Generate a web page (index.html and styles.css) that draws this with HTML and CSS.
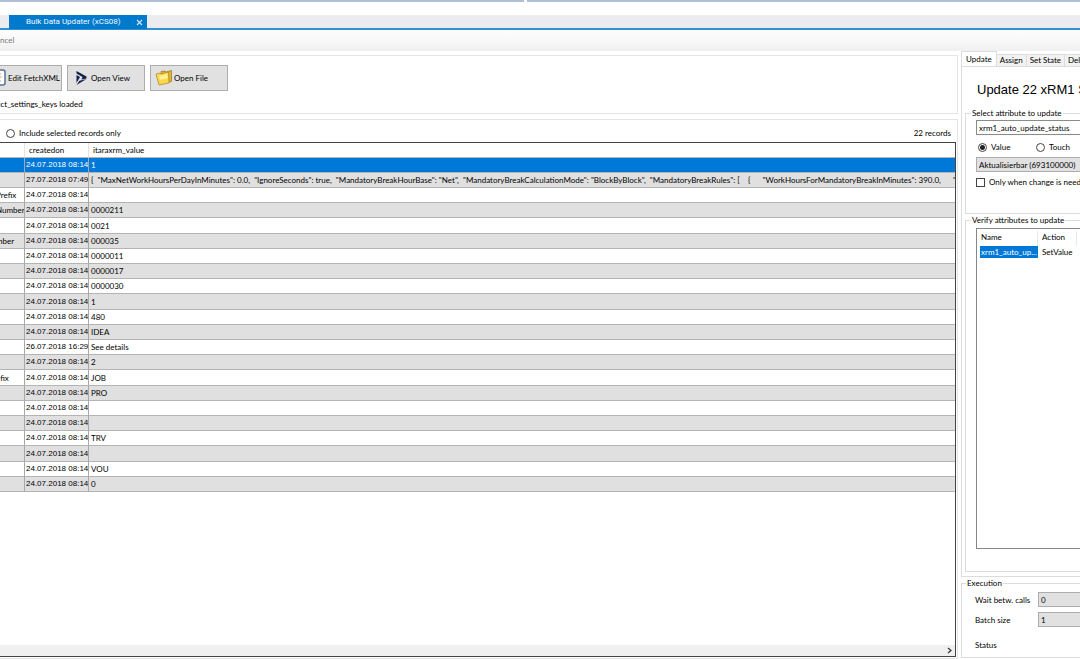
FILE: index.html
```html
<!DOCTYPE html>
<html lang="en">
<head>
    <meta charset="UTF-8">
    <meta name="viewport" content="width=device-width, initial-scale=1.0">
    <title>Bulk Data Updater</title>
    <link rel="stylesheet" href="styles.css">
</head>
<body>

<div class="window-edge"><span class="edge-left"></span><span class="edge-right"></span></div>
<div class="doc-tabs">
    <div class="doc-tab">
        <span>Bulk Data Updater (xCS08)</span>
        <button class="close" aria-label="Close">
            <svg width="7" height="7" viewBox="0 0 7 7"><path d="M1 1l5 5M6 1l-5 5" stroke="#d5eafa" stroke-width="1.1"/></svg>
        </button>
    </div>
</div>
<div class="menu"><button class="cancel">ncel</button></div>

<div class="main">
    <div class="left">
        <section class="box source">
            <div class="source-buttons">
                <button class="button">
                    <svg width="18" height="18" viewBox="0 0 18 18"><rect x="2" y="1" width="14" height="15" rx="2" fill="#fff" stroke="#52719c" stroke-width="1.5"/><path d="M5 5h7M5 8h8M5 12h7" stroke="#e8a060"/></svg>
                    Edit FetchXML
                </button>
                <button class="button">
                    <svg width="18" height="18" viewBox="0 0 18 18"><path d="M4.500 2L14.500 7.500V9.500L9.500 10.500L10.500 8L4.500 4.500Z" fill="#12204d"/><path d="M14.500 10L4.500 16L7.500 11.800Z" fill="#12204d"/><path d="M4.500 6L8 8L4.500 14Z" fill="#12204d"/></svg>
                    Open View
                </button>
                <button class="button">
                    <svg width="18" height="18" viewBox="0 0 18 18">
                        <path d="M6 2.500l4-.5 1 1 5.500-1.500v11l-9 2z" fill="#e3b62b" stroke="#8c7430" stroke-width=".7"/>
                        <path d="M1 5l4-1 1 1 7.500-2 .5 11-10 2z" fill="#fbd84b" stroke="#a58428" stroke-width=".7"/>
                        <path d="M4 7l8-2 1 4-8 2z" fill="#fff09a"/>
                    </svg>
                    Open File
                </button>
            </div>
            <p class="status-text">uct_settings_keys loaded</p>
        </section>

        <section class="box records">
            <div class="records-bar">
                <label class="check"><input type="radio" name="include"> Include selected records only</label>
                <span>22 records</span>
            </div>
            <div class="grid">
                <table>
                    <thead>
                        <tr><th class="key"></th><th class="date">createdon</th><th>itaraxrm_value</th></tr>
                    </thead>
                    <tbody>
                        <tr class="selected"><td></td><td>24.07.2018 08:14</td><td>1</td></tr>
                        <tr><td></td><td>27.07.2018 07:49</td><td>{  "MaxNetWorkHoursPerDayInMinutes": 0.0,  "IgnoreSeconds": true,  "MandatoryBreakHourBase": "Net",  "MandatoryBreakCalculationMode": "BlockByBlock",  "MandatoryBreakRules": [    {      "WorkHoursForMandatoryBreakInMinutes": 390.0,      "WorkHoursF</td></tr>
                        <tr><td>Prefix</td><td>24.07.2018 08:14</td><td></td></tr>
                        <tr><td>Number</td><td>24.07.2018 08:14</td><td>0000211</td></tr>
                        <tr><td></td><td>24.07.2018 08:14</td><td>0021</td></tr>
                        <tr><td>mber</td><td>24.07.2018 08:14</td><td>000035</td></tr>
                        <tr><td></td><td>24.07.2018 08:14</td><td>0000011</td></tr>
                        <tr><td></td><td>24.07.2018 08:14</td><td>0000017</td></tr>
                        <tr><td></td><td>24.07.2018 08:14</td><td>0000030</td></tr>
                        <tr><td></td><td>24.07.2018 08:14</td><td>1</td></tr>
                        <tr><td></td><td>24.07.2018 08:14</td><td>480</td></tr>
                        <tr><td></td><td>24.07.2018 08:14</td><td>IDEA</td></tr>
                        <tr><td></td><td>26.07.2018 16:29</td><td>See details</td></tr>
                        <tr><td></td><td>24.07.2018 08:14</td><td>2</td></tr>
                        <tr><td>efix</td><td>24.07.2018 08:14</td><td>JOB</td></tr>
                        <tr><td></td><td>24.07.2018 08:14</td><td>PRO</td></tr>
                        <tr><td></td><td>24.07.2018 08:14</td><td></td></tr>
                        <tr><td></td><td>24.07.2018 08:14</td><td></td></tr>
                        <tr><td></td><td>24.07.2018 08:14</td><td>TRV</td></tr>
                        <tr><td></td><td>24.07.2018 08:14</td><td></td></tr>
                        <tr><td></td><td>24.07.2018 08:14</td><td>VOU</td></tr>
                        <tr><td></td><td>24.07.2018 08:14</td><td>0</td></tr>
                    </tbody>
                </table>
                <div class="scrollbar">
                    <svg width="11" height="11" viewBox="0 0 11 11"><path d="M4 3l3 2.500-3 2.500" fill="none" stroke="#333" stroke-width="1.2"/></svg>
                </div>
            </div>
        </section>
    </div>

    <aside class="right">
        <div class="tabs">
            <button class="tab active">Update</button>
            <button class="tab">Assign</button>
            <button class="tab">Set State</button>
            <button class="tab">Delete</button>
        </div>
        <div class="panel">
            <h1>Update 22 xRM1 Settings</h1>
            <fieldset class="attribute">
                <legend>Select attribute to update</legend>
                <select class="combo" aria-label="Attribute"><option>xrm1_auto_update_status</option></select>
                <div class="radios">
                    <label class="check"><input type="radio" name="mode" checked> Value</label>
                    <label class="check"><input type="radio" name="mode"> Touch</label>
                </div>
                <select class="combo grey" aria-label="Value"><option>Aktualisierbar (693100000)</option></select>
                <label class="check"><input type="checkbox"> Only when change is needed</label>
            </fieldset>
            <fieldset class="verify">
                <legend>Verify attributes to update</legend>
                <div class="list">
                    <table>
                        <thead><tr><th>Name</th><th>Action</th></tr></thead>
                        <tbody><tr><td class="picked">xrm1_auto_up...</td><td>SetValue</td></tr></tbody>
                    </table>
                </div>
            </fieldset>
        </div>
        <fieldset class="execution">
            <legend>Execution</legend>
            <div class="field"><label for="wait">Wait betw. calls</label><input id="wait" type="text" value="0"></div>
            <div class="field"><label for="batch">Batch size</label><input id="batch" type="text" value="1"></div>
            <p>Status</p>
        </fieldset>
    </aside>
</div>

</body>
</html>
```
FILE: styles.css
```css
* {
    box-sizing: border-box;
}
body {
    margin: 0;
    height: 100vh;
    display: flex;
    flex-direction: column;
    overflow: hidden;
    background: #fff;
    color: #000;
    font: 8px/12px Lato, "Liberation Sans", Arial, sans-serif;
    white-space: nowrap;
}
button, input, select {
    font: inherit;
    color: inherit;
}
p, h1 {
    margin: 0;
}

/* top of the window */
.window-edge {
    display: flex;
    gap: 3px;
    height: 2px;
    flex: none;
}
.edge-left {
    width: 524px;
    background: #afbfd5;
}
.edge-right {
    flex: 1;
    background: #afbfd5;
}
.doc-tabs {
    flex: none;
    margin-top: 13px;
    height: 15px;
    padding-left: 9px;
    background: #ecebf0;
    border-bottom: 2px solid #348fcf;
}
.doc-tab {
    display: flex;
    align-items: center;
    justify-content: space-between;
    width: 138px;
    height: 14px;
    padding: 0 4px 0 17px;
    background: #007acc;
    color: #f0f8ff;
    font-family: Roboto, sans-serif;
}
.close {
    display: flex;
    border: 0;
    padding: 0;
    background: none;
}
.menu {
    flex: none;
    height: 21px;
    background: linear-gradient(#fdfdfd, #f8f8f8 50%, #f0f0f0);
}
.cancel {
    display: block;
    border: 0;
    padding: 0;
    background: none;
    color: #777;
    line-height: 20px;
}

.main {
    flex: 1;
    min-height: 0;
    display: grid;
    grid-template-columns: minmax(0, 1fr) 119px;
    gap: 3px;
}
.left {
    display: flex;
    flex-direction: column;
    gap: 5px;
    padding-top: 4px;
    min-height: 0;
}
.box {
    border: 1px solid #e4e4e4;
    border-left: 0;
}
.source {
    height: 59px;
}
.source-buttons {
    display: flex;
    gap: 5px;
    margin: 9px 0 0 -16px;
}
.button {
    display: flex;
    align-items: center;
    gap: 1px;
    width: 78px;
    height: 26px;
    padding: 0 4px;
    border: 1px solid #adadad;
    background: #e1e1e1;
    white-space: nowrap;
}
.button svg {
    flex: none;
}
.status-text {
    margin-top: 7px;
    text-indent: -4px;
}

/* records grid */
.records {
    flex: 1;
    min-height: 0;
    display: flex;
    flex-direction: column;
    padding: 7px 1px 1px 0;
}
.records-bar {
    display: flex;
    justify-content: space-between;
    padding: 0 5px 3px 6px;
}
.check {
    display: flex;
    align-items: center;
    gap: 4px;
}
.check input {
    appearance: none;
    flex: none;
    width: 9px;
    height: 9px;
    margin: 0;
    border: 1px solid #444;
    background: #fff;
}
.check input[type="radio"] {
    border-radius: 50%;
}
.check input[type="radio"]:checked {
    background: radial-gradient(circle, #222 2px, #fff 3px);
}
.grid {
    flex: 1;
    min-height: 0;
    display: flex;
    flex-direction: column;
    justify-content: space-between;
    border: 1px solid #444;
    border-left: 0;
}
.grid table {
    width: 100%;
    table-layout: fixed;
    border-collapse: separate;
    border-spacing: 0;
}
.grid th, .grid td {
    height: 15px;
    padding: 0 0 0 2px;
    overflow: hidden;
    white-space: pre;
    line-height: 14px;
    text-align: left;
    font-weight: normal;
    border-right: 1px solid #a8a8a8;
    border-bottom: 1px solid #b4b4b4;
}
.grid th {
    padding-left: 4px;
    border-right-color: #e4e4e4;
}
.grid th:last-child, .grid td:last-child {
    border-right: 0;
}
.grid tr:nth-child(5n) td {
    height: 16px;
}
.grid tr:nth-child(even) td {
    background: #e0e0e0;
}
.grid td:first-child {
    padding: 0;
    text-indent: -4px;
}
.grid td:nth-child(2) {
    padding-left: 1px;
    font-family: "Liberation Sans", Arial, sans-serif;
}
.grid .selected td {
    background: #0078d7;
    color: #fff;
}
.key {
    width: 25px;
}
.date {
    width: 64px;
}
.scrollbar {
    display: flex;
    justify-content: flex-end;
    background: #f0f0f0;
}

/* right side */
.right {
    overflow: hidden;
    display: flex;
    flex-direction: column;
    min-height: 0;
}
.tabs {
    display: flex;
    align-items: flex-end;
    height: 15px;
    flex: none;
}
.tab {
    height: 12px;
    padding: 0 3px;
    border: 1px solid #dcdcdc;
    border-width: 1px 1px 0 0;
    background: #f2f2f2;
    line-height: 11px;
}
.tab.active {
    height: 15px;
    padding: 0 4px;
    border-left-width: 1px;
    background: #fff;
}
.panel {
    flex: 1;
    min-height: 0;
    display: flex;
    flex-direction: column;
    border: 1px solid #dcdcdc;
    border-right: 0;
    padding: 0 0 4px 3px;
}
h1 {
    padding: 14px 0 8px 12px;
    font: 13px/18px "Liberation Sans", Arial, sans-serif;
    color: #000;
}
fieldset {
    min-width: 0;
    margin: 0;
    padding: 0 0 0 10px;
    border: 1px solid #dcdcdc;
    border-right: 0;
}
legend {
    margin-left: -5px;
    padding: 0 1px;
}
.attribute {
    height: 107px;
}
.combo {
    appearance: none;
    display: block;
    width: 100%;
    height: 15px;
    margin: 1px 0 6px;
    padding: 0 2px;
    border: 1px solid #8a8a8a;
    border-right: 0;
    border-radius: 0;
    background: #fff;
}
.combo.grey {
    margin: 4px 0;
    border-color: #adadad;
    background: #e1e1e1;
}
.radios {
    display: grid;
    grid-template-columns: 58px 1fr;
    padding-left: 2px;
}
.verify {
    flex: 1;
    min-height: 0;
    display: flex;
    padding-bottom: 22px;
}
.list {
    flex: 1;
    margin-top: 2px;
    padding: 2px 0 0 3px;
    border: 1px solid #828790;
    border-right: 0;
    overflow: hidden;
}
.list table {
    width: 97px;
    table-layout: fixed;
    border-collapse: separate;
    border-spacing: 0;
}
.list th, .list td {
    height: 12px;
    padding: 0 4px;
    text-align: left;
    font-weight: normal;
}
.list th {
    height: 15px;
    padding-left: 1px;
    border-right: 1px solid #e8e8e8;
    vertical-align: top;
}
.list th:first-child {
    width: 58px;
}
.list th:last-child {
    padding-left: 4px;
}
.list .picked {
    padding: 0 1px;
    background: #0078d7;
    color: #fff;
}
.execution {
    flex: none;
    height: 81px;
    margin-bottom: 1px;
    padding-left: 13px;
}
.execution legend {
    margin-left: -9px;
}
.field {
    display: flex;
    align-items: center;
    height: 15px;
    margin: 3px 0 5px;
}
.field label {
    width: 63px;
    flex: none;
}
.field input {
    flex: 1;
    min-width: 0;
    height: 15px;
    padding: 0 2px;
    border: 1px solid #adadad;
    border-right: 0;
    background: #e1e1e1;
}
.execution p {
    margin-top: 12px;
}
```
